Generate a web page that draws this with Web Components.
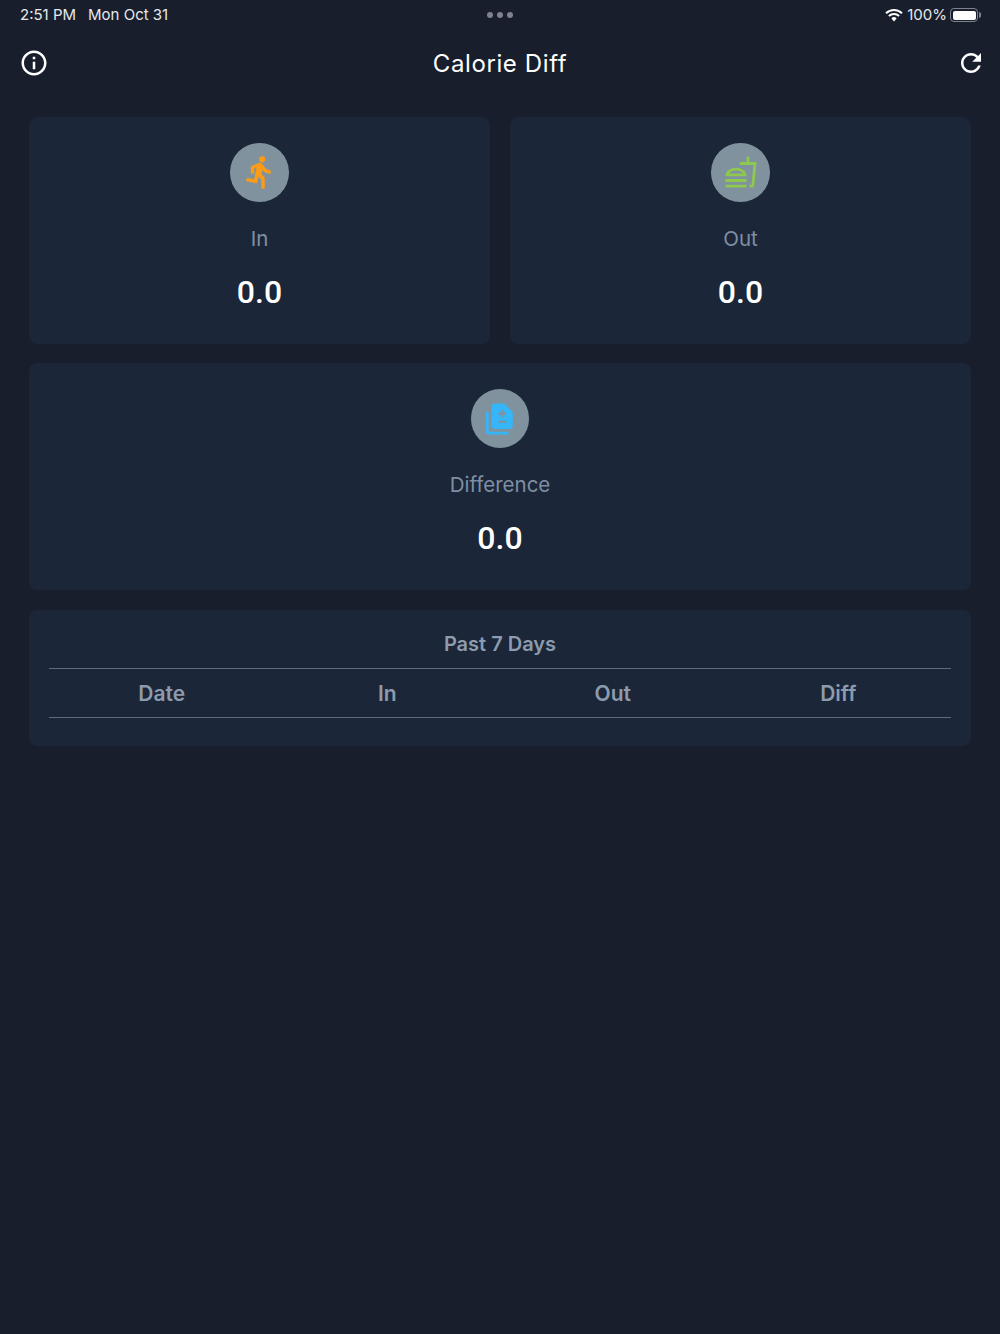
<!DOCTYPE html>
<html>
<head>
<meta charset="utf-8">
<title>Calorie Diff</title>
<style>
  html, body { margin: 0; background: #181e2b; }
  body { font-family: "Inter", "Open Sans", sans-serif; }
</style>
</head>
<body>
<calorie-app></calorie-app>
<script>
const ICONS = {
  info: '<path d="M11 7h2v2h-2zm0 4h2v6h-2zm1-9C6.48 2 2 6.48 2 12s4.48 10 10 10 10-4.48 10-10S17.52 2 12 2zm0 18c-4.41 0-8-3.59-8-8s3.59-8 8-8 8 3.59 8 8-3.59 8-8 8z"/>',
  refresh: '<path d="M17.65 6.35C16.2 4.9 14.21 4 12 4c-4.42 0-7.99 3.58-7.99 8s3.57 8 7.99 8c3.73 0 6.84-2.55 7.73-6h-2.08c-.82 2.33-3.04 4-5.65 4-3.31 0-6-2.69-6-6s2.69-6 6-6c1.66 0 3.14.69 4.22 1.78L13 11h7V4l-2.35 2.35z"/>',
  run: '<path stroke-width="0.25" d="M13.49 5.48c1.1 0 2-.9 2-2s-.9-2-2-2-2 .9-2 2 .9 2 2 2zm-3.6 13.9l1-4.4 2.1 2v6h2v-7.5l-2.1-2 .6-3c1.3 1.5 3.3 2.5 5.5 2.5v-2c-1.9 0-3.5-1-4.3-2.4l-1-1.6c-.4-.6-1-1-1.7-1-.3 0-.5.1-.8.1l-5.2 2.2v4.7h2v-3.4l1.8-.7-1.6 8.1-4.9-1-.4 2 7 1.4z"/>',
  food: '<path d="M1 21.98c0 .56.45 1.01 1.01 1.01H15c.56 0 1.01-.45 1.01-1.01V21H1v.98zM8.5 8.99C4.75 8.99 1 11 1 15h15c0-4-3.75-6.01-7.5-6.01zM3.62 13c1.11-1.55 3.47-2.01 4.88-2.01s3.77.46 4.88 2.01H3.62zM1 17h15v2H1zM18 5V1h-2v4h-5l.23 2h9.56l-1.4 14H18v2h1.72c.84 0 1.53-.65 1.63-1.47L23 5h-5z"/>',
  diff: '<path d="M18 23H4c-1.1 0-2-.9-2-2V7h2v14h14v2zM15 1H8c-1.1 0-1.99.9-1.99 2L6 17c0 1.1.89 2 1.99 2H19c1.1 0 2-.9 2-2V7l-6-6zM16 14.8h-5v-1.6h5zM16.1 9.15h-1.75v1.75h-1.7V9.15h-1.75v-1.7h1.75V5.7h1.7v1.75h1.75z"/>'
};

class StatusBar extends HTMLElement {
  constructor() {
    super();
    const shadow = this.attachShadow({ mode: "open" });
    shadow.innerHTML = `
      <style>
        :host {
          display: grid;
          grid-template-columns: 1fr auto 1fr;
          align-items: center;
          height: 30px;
          padding: 0 18px;
          color: #e6e8ec;
          font: 15px/30px "Inter", "Liberation Sans", sans-serif;
        }
        .left { display: flex; gap: 12px; padding-left: 2px; }
        .dots { display: flex; gap: 4px; }
        .dots i { width: 6px; height: 6px; border-radius: 50%; background: #7d828c; }
        .right { display: flex; justify-content: flex-end; align-items: center; gap: 4px; }
        .battery {
          position: relative;
          box-sizing: border-box;
          width: 28px;
          height: 14px;
          padding: 1.5px;
          margin: 0 4px 0 -1px;
          border: 1px solid #7d828c;
          border-radius: 4px;
        }
        .battery b { display: block; height: 100%; border-radius: 2px; background: #fff; }
        .battery::after {
          content: "";
          position: absolute;
          right: -4px;
          top: 3px;
          width: 2px;
          height: 6px;
          border-radius: 0 2px 2px 0;
          background: #7d828c;
        }
      </style>
      <div class="left"><span>2:51 PM</span><span>Mon Oct 31</span></div>
      <div class="dots"><i></i><i></i><i></i></div>
      <div class="right">
        <svg width="18" height="14" viewBox="0 0 18 14" fill="none" stroke="#fff" stroke-width="2">
          <path d="M1 5.2a11.4 11.4 0 0 1 16 0"/>
          <path d="M3.9 8a7.3 7.3 0 0 1 10.2 0"/>
          <path d="M9 13.4l-2.6-3a3.6 3.6 0 0 1 5.2 0z" fill="#fff" stroke="none"/>
        </svg>
        <span>100%</span>
        <div class="battery"><b></b></div>
      </div>
    `;
  }
}
customElements.define("status-bar", StatusBar);

class AppBar extends HTMLElement {
  constructor() {
    super();
    const shadow = this.attachShadow({ mode: "open" });
    shadow.innerHTML = `
      <style>
        :host {
          display: grid;
          grid-template-columns: 1fr auto 1fr;
          align-items: center;
          height: 66px;
          padding: 0 14px;
          color: #fff;
        }
        svg { display: block; fill: #fff; }
        .info { margin-left: 5px; }
        .refresh { justify-self: end; }
        h1 {
          margin: 0;
          font: 400 24px "Inter", sans-serif;
          letter-spacing: 0.6px;
        }
      </style>
      <svg class="info" width="30" height="30" viewBox="0 0 24 24">${ICONS.info}</svg>
      <h1><slot></slot></h1>
      <svg class="refresh" width="30" height="30" viewBox="0 0 24 24">${ICONS.refresh}</svg>
    `;
  }
}
customElements.define("app-bar", AppBar);

class StatCard extends HTMLElement {
  constructor() {
    super();
    const shadow = this.attachShadow({ mode: "open" });
    const icon = ICONS[this.getAttribute("icon")];
    const size = this.getAttribute("size") || 34;
    const color = this.getAttribute("color");
    shadow.innerHTML = `
      <style>
        :host {
          display: flex;
          flex-direction: column;
          align-items: center;
          box-sizing: border-box;
          height: 226.75px;
          padding-top: 26px;
          border-radius: 8px;
          background: #1b2638;
        }
        .circle {
          display: flex;
          align-items: center;
          justify-content: center;
          width: 58.5px;
          height: 58.5px;
          border-radius: 50%;
          background: #7f929e;
        }
        svg { display: block; fill: ${color}; stroke: ${color}; stroke-width: 0; }
        .label {
          margin-top: 24px;
          color: #7f8fa3;
          font: 20.5px/26px "Inter", sans-serif;
        }
        .value {
          margin-top: 20.5px;
          color: #fff;
          font: 500 32px/40px "Roboto", sans-serif;
        }
      </style>
      <div class="circle"><svg width="${size}" height="${size}" viewBox="0 0 24 24">${icon}</svg></div>
      <div class="label">${this.getAttribute("label")}</div>
      <div class="value"><slot></slot></div>
    `;
  }
}
customElements.define("stat-card", StatCard);

class HistoryTable extends HTMLElement {
  constructor() {
    super();
    const shadow = this.attachShadow({ mode: "open" });
    shadow.innerHTML = `
      <style>
        :host {
          display: block;
          box-sizing: border-box;
          height: 136px;
          padding: 0 20px;
          border-radius: 8px;
          background: #1b2638;
          color: #8c9bad;
          font: 600 20px "Inter", sans-serif;
        }
        .title {
          height: 59px;
          line-height: 68px;
          box-sizing: border-box;
          text-align: center;
          border-bottom: 1px solid #5c6b7d;
        }
        .head {
          display: grid;
          grid-template-columns: repeat(4, 1fr);
          height: 49px;
          line-height: 50px;
          font-size: 21px;
          box-sizing: border-box;
          text-align: center;
          border-bottom: 1px solid #5c6b7d;
        }
      </style>
      <div class="title">Past 7 Days</div>
      <div class="head"><span>Date</span><span>In</span><span>Out</span><span>Diff</span></div>
    `;
  }
}
customElements.define("history-table", HistoryTable);

class CalorieApp extends HTMLElement {
  constructor() {
    super();
    const shadow = this.attachShadow({ mode: "open" });
    shadow.innerHTML = `
      <style>
        :host { display: block; height: 1334px; background: #181e2b; }
        main {
          display: grid;
          grid-template-columns: 1fr 1fr;
          gap: 19.5px 20px;
          padding: 21px 29px 0;
        }
        .wide { grid-column: 1 / -1; }
      </style>
      <status-bar></status-bar>
      <app-bar>Calorie Diff</app-bar>
      <main>
        <stat-card icon="run" size="36" color="#ff9c14" label="In">0.0</stat-card>
        <stat-card icon="food" color="#8fc84f" label="Out">0.0</stat-card>
        <stat-card class="wide" icon="diff" color="#35b6f8" label="Difference">0.0</stat-card>
        <history-table class="wide"></history-table>
      </main>
    `;
  }
}
customElements.define("calorie-app", CalorieApp);
</script>
</body>
</html>
